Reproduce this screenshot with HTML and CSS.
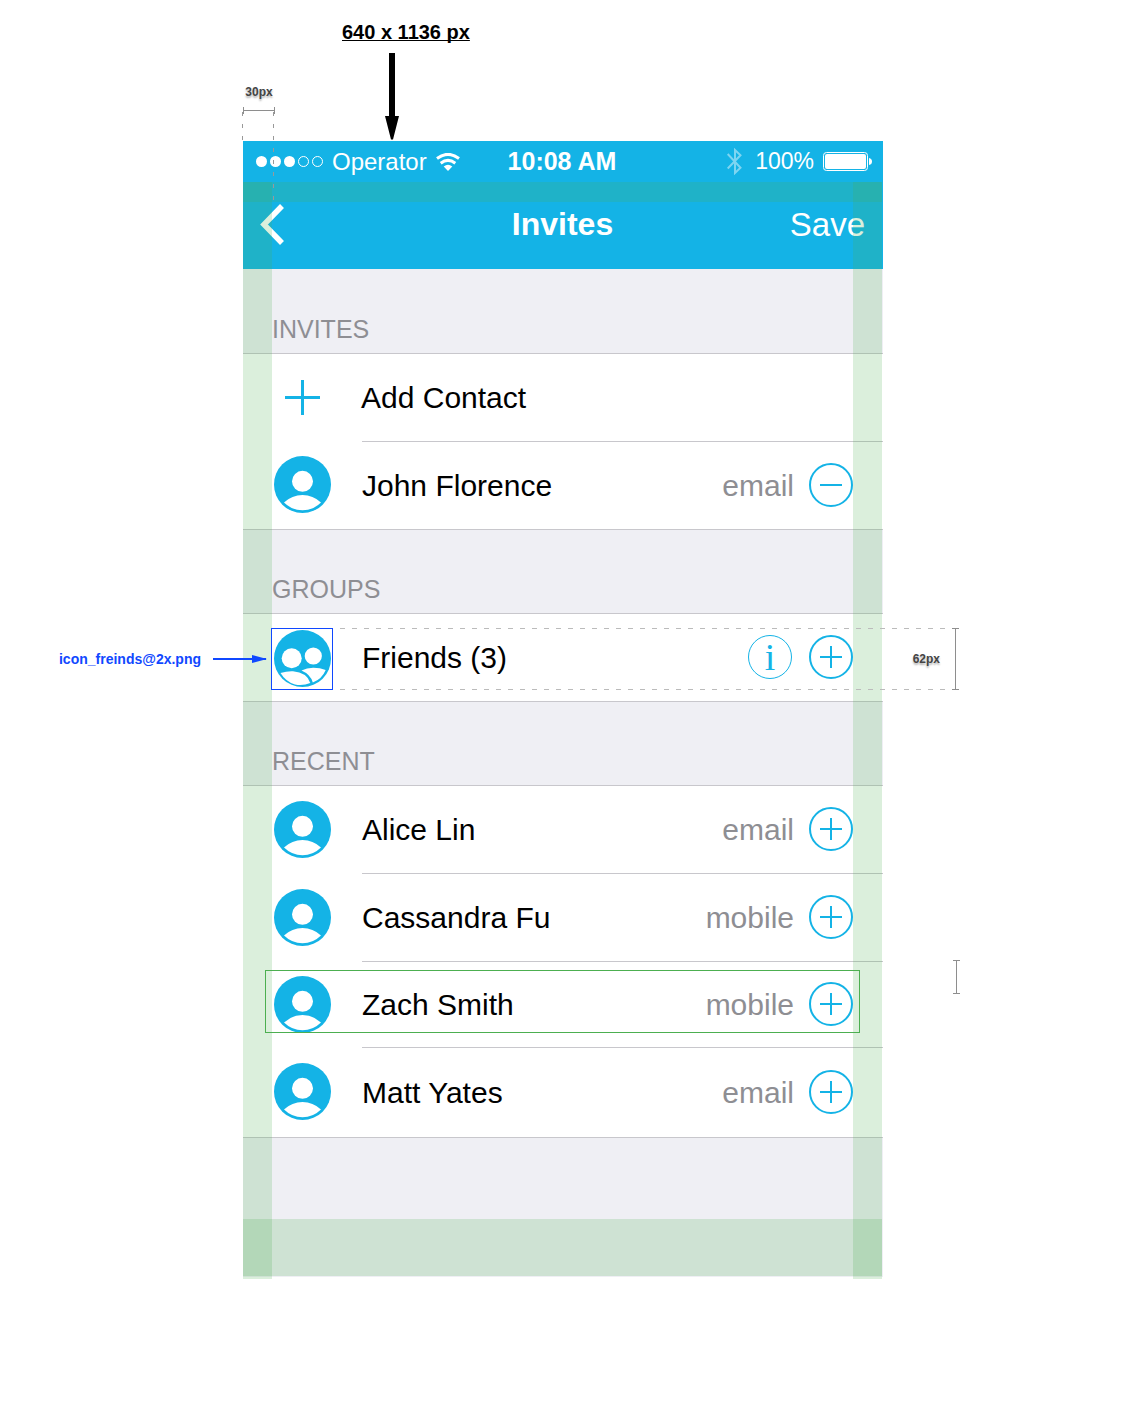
FILE: index.html
```html
<!DOCTYPE html>
<html lang="en">
<head>
<meta charset="utf-8">
<meta name="viewport" content="width=device-width, initial-scale=1">
<title>Invites – layout spec</title>
<link rel="stylesheet" href="styles.css">
</head>
<body>
<svg class="sprite" aria-hidden="true">
  <symbol id="person" viewBox="0 0 57 57">
    <circle cx="28.5" cy="28.5" r="28.5" fill="#14b3e6"/>
    <circle cx="28.5" cy="25.3" r="10.5" fill="#fff"/>
    <path d="M10 46.5Q18 39 28.5 39T47 46.5Q39 54.3 28.5 54.3T10 46.5Z" fill="#fff"/>
  </symbol>
  <symbol id="plus" viewBox="0 0 22 22"><path d="M11 0V22M0 11H22" stroke="#14b3e6" stroke-width="2"/></symbol>
  <symbol id="minus" viewBox="0 0 22 22"><path d="M0 11H22" stroke="#14b3e6" stroke-width="2"/></symbol>
</svg>

<main class="spec">
  <header class="spec-head">
    <div class="inset-note">
      <span class="measure-label">30px</span>
      <svg width="32" height="7" viewBox="0 0 32 7"><path d="M.5 0V7M31.5 0V7M0 3.5H32" stroke="#8e8e8e" fill="none"/></svg>
    </div>
    <div class="size-note">
      <span class="size-label">640 x 1136 px</span>
      <svg class="size-arrow" width="14" height="88" viewBox="0 0 14 88"><path d="M4 0H10V63H14L8 86.500H6L0 63H4Z"/></svg>
    </div>
  </header>

  <section class="phone">
    <div class="status">
      <div class="status-group">
        <svg width="67" height="11" viewBox="0 0 67 11" fill="#fff"><circle cx="5.500" cy="5.500" r="5.500"/><circle cx="19.500" cy="5.500" r="5.500"/><circle cx="33.500" cy="5.500" r="5.500"/><g fill="none" stroke="#fff"><circle cx="47.500" cy="5.500" r="5"/><circle cx="61.500" cy="5.500" r="5"/></g></svg>
        <span class="operator">Operator</span>
        <svg width="24" height="18" viewBox="0 0 24 18" fill="none" stroke="#fff" stroke-width="3"><path d="M1 5.500Q12-2.800 23 5.500M4.700 10.200Q12 4.600 19.300 10.200"/><path d="M12 18L7.700 13.400Q12 10.200 16.300 13.400Z" fill="#fff" stroke="none"/></svg>
      </div>
      <span class="time">10:08 AM</span>
      <div class="status-group status-end">
        <svg width="15" height="27" viewBox="0 0 15 27" fill="none" stroke="#fff" stroke-width="2" opacity=".45"><path d="M.7 6L13.500 19.800L8 25V2L13.500 7.200L.7 20.500"/></svg>
        <span class="charge">100%</span>
        <svg width="49" height="19" viewBox="0 0 49 19" fill="#fff"><rect x=".5" y=".5" width="44" height="18" rx="3" fill="none" stroke="#fff"/><rect x="2" y="2" width="41" height="15" rx="2"/><path d="M46 6Q49 6.500 49 9.500T46 13Z"/></svg>
      </div>
    </div>

    <nav class="nav">
      <button class="back" type="button" aria-label="Back"><svg width="24" height="41" viewBox="0 0 24 41"><path d="M22 2L4 20.500L22 39" fill="none" stroke="#fff" stroke-width="5.500"/></svg></button>
      <h1 class="title">Invites</h1>
      <button class="save" type="button">Save</button>
    </nav>

    <div class="lists">
      <h2 class="group">Invites</h2>
      <ul class="list">
        <li class="row">
          <button class="add" type="button">
            <svg class="add-icon" width="35" height="35" viewBox="0 0 35 35"><path d="M17.500 0V35M0 17.500H35" stroke="#14b3e6" stroke-width="3"/></svg>
            <span>Add Contact</span>
          </button>
        </li>
        <li class="row">
          <svg class="avatar"><use href="#person"/></svg>
          <span class="name">John Florence</span>
          <span class="via">email</span>
          <button class="round" type="button" aria-label="Remove John Florence"><svg class="sign"><use href="#minus"/></svg></button>
        </li>
      </ul>

      <h2 class="group">Groups</h2>
      <ul class="list">
        <li class="row">
          <svg class="avatar avatar-group" viewBox="0 0 57 57"><circle cx="28.500" cy="28.500" r="28.500" fill="#14b3e6"/><g fill="#fff"><circle cx="17.700" cy="28.300" r="10"/><circle cx="39.300" cy="26" r="8.600"/><path d="M6.500 43Q13 41 19 41.300Q33 42.500 36.300 53Q29 56 21 54.500Q12 52 6.500 43Z"/><path d="M27.500 40.600Q33 37.600 39.500 37.700Q46 37.700 51.700 40Q48 49 38.800 52.500Q36.500 44.500 27.500 40.600Z"/></g></svg>
          <span class="name">Friends (3)</span>
          <button class="round info" type="button" aria-label="About Friends">i</button>
          <button class="round" type="button" aria-label="Add Friends"><svg class="sign"><use href="#plus"/></svg></button>
          <div class="asset-box"></div>
          <div class="asset-note">
            <span>icon_freinds@2x.png</span>
            <svg width="54" height="10" viewBox="0 0 54 10"><path d="M0 5H53" stroke="#1048ff" stroke-width="2"/><path d="M39 1L54 5L39 9Z" fill="#1048ff"/></svg>
          </div>
          <div class="height-note">
            <span class="measure-label">62px</span>
            <svg width="7" height="62" viewBox="0 0 7 62"><path d="M0 .5H7M0 61.500H7M3.500 0V62" stroke="#8e8e8e" fill="none"/></svg>
          </div>
        </li>
      </ul>

      <h2 class="group">Recent</h2>
      <ul class="list">
        <li class="row">
          <svg class="avatar"><use href="#person"/></svg>
          <span class="name">Alice Lin</span>
          <span class="via">email</span>
          <button class="round" type="button" aria-label="Add Alice Lin"><svg class="sign"><use href="#plus"/></svg></button>
        </li>
        <li class="row">
          <svg class="avatar"><use href="#person"/></svg>
          <span class="name">Cassandra Fu</span>
          <span class="via">mobile</span>
          <button class="round" type="button" aria-label="Add Cassandra Fu"><svg class="sign"><use href="#plus"/></svg></button>
        </li>
        <li class="row row-short">
          <svg class="avatar"><use href="#person"/></svg>
          <span class="name">Zach Smith</span>
          <span class="via">mobile</span>
          <button class="round" type="button" aria-label="Add Zach Smith"><svg class="sign"><use href="#plus"/></svg></button>
          <div class="row-box"></div>
          <svg class="gap-note" width="7" height="34" viewBox="0 0 7 34"><path d="M0 .5H7M0 33.500H7M3.500 0V34" stroke="#8e8e8e" fill="none"/></svg>
        </li>
        <li class="row row-tall">
          <svg class="avatar"><use href="#person"/></svg>
          <span class="name">Matt Yates</span>
          <span class="via">email</span>
          <button class="round" type="button" aria-label="Add Matt Yates"><svg class="sign"><use href="#plus"/></svg></button>
        </li>
      </ul>
    </div>

    <div class="band band-left"></div>
    <div class="band band-right"></div>
    <div class="band band-top"></div>
    <div class="band band-bottom"></div>
    <div class="dash dash-edge"></div>
    <div class="dash dash-inset"></div>
  </section>
</main>
</body>
</html>
```
FILE: styles.css
```css
* { box-sizing: border-box; }

body {
  margin: 0;
  background: #fff;
  color: #000;
  font-family: "Liberation Sans", Arial, Helvetica, sans-serif;
}

svg { display: block; flex: none; }
.sprite { position: absolute; width: 0; height: 0; }

button {
  margin: 0;
  padding: 0;
  border: 0;
  background: none;
  color: inherit;
  font: inherit;
  cursor: pointer;
}

.spec {
  max-width: 640px;
  margin: 0 auto;
  padding-bottom: 141px;
}

/* notes above the artboard */
.spec-head {
  display: flex;
  align-items: flex-start;
  gap: 67px;
  padding-top: 20px;
}

.inset-note {
  display: flex;
  flex-direction: column;
  align-items: center;
  gap: 8px;
  width: 32px;
  padding-top: 65px;
}

.measure-label {
  color: #444;
  font-size: 12px;
  font-weight: bold;
  line-height: 14px;
  text-shadow: 0 2px 2px rgba(0, 0, 0, 0.3);
}

.size-label {
  display: block;
  font-size: 20px;
  font-weight: bold;
  line-height: 24px;
  text-decoration: underline;
  text-decoration-thickness: 1px;
  text-decoration-skip-ink: none;
}

.size-arrow { margin: 9px 0 0 43px; }

/* artboard */
.phone {
  position: relative;
  background: #efeff4;
  padding-bottom: 139px;
}

.status {
  display: grid;
  grid-template-columns: 1fr auto 1fr;
  align-items: center;
  height: 41px;
  padding: 0 11px 0 13px;
  background: #14b3e6;
  color: #fff;
  font-size: 24px;
}

.status-group { display: flex; align-items: center; gap: 9px; }
.status-end { justify-content: flex-end; }
.charge { padding-left: 4px; font-size: 23px; }
.time { padding-right: 4px; font-size: 25px; font-weight: bold; }

.nav {
  display: grid;
  grid-template-columns: 1fr auto 1fr;
  align-items: center;
  height: 87px;
  padding: 0 18px 2px 17px;
  background: #14b3e6;
  color: #fff;
}

.back { justify-self: start; }
.title { margin: 0; font-size: 32px; line-height: 40px; padding-bottom: 2px; }
.save { justify-self: end; font-size: 33px; }

.lists { padding-top: 1px; }

.group {
  display: flex;
  align-items: flex-end;
  height: 84px;
  margin: 0;
  padding: 0 29px 10px;
  border-bottom: 1px solid #c8c7cc;
  color: #8e8e93;
  font-size: 25px;
  font-weight: normal;
  line-height: 28px;
  text-transform: uppercase;
}

.list {
  margin: 0;
  padding: 0;
  list-style: none;
  background: #fff;
  border-bottom: 1px solid #c8c7cc;
  font-size: 30px;
}

.row {
  position: relative;
  display: flex;
  align-items: center;
  height: 88px;
  padding: 0 30px 0 31px;
}

.row:last-child { height: 87px; }
.row-short { height: 86px; }
.row.row-tall { height: 89px; }

/* separator starts at the text column */
.row:not(:last-child)::after {
  content: "";
  position: absolute;
  right: 0;
  bottom: 0;
  left: 119px;
  height: 1px;
  background: #c8c7cc;
}

.avatar { width: 57px; height: 57px; margin-bottom: 2px; }
.avatar-group { margin: 2px 0 0; }
.name { flex: 1; padding-left: 31px; }
.via { color: #8e8e93; margin-right: 15px; }

.add {
  display: flex;
  align-items: center;
  flex: 1;
  gap: 41px;
  height: 100%;
  padding-left: 11px;
}

.add-icon { margin-bottom: 2px; }

.round {
  display: flex;
  align-items: center;
  justify-content: center;
  width: 44px;
  height: 44px;
  margin-bottom: 2px;
  border: 2px solid #14b3e6;
  border-radius: 50%;
  color: #14b3e6;
}

.sign { width: 22px; height: 22px; }

.info {
  margin-right: 17px;
  border-width: 1px;
  font-family: "Liberation Serif", "Times New Roman", serif;
  font-size: 38px;
  line-height: 40px;
}

/* margin guides */
.band {
  position: absolute;
  z-index: 1;
  background: rgba(76, 175, 80, 0.2);
  pointer-events: none;
}

.band-left, .band-right { top: 41px; bottom: -2px; width: 29px; }
.band-left { left: 0; }
.band-right { right: 1px; }
.band-top { top: 41px; left: 0; right: 1px; height: 20px; }
.band-bottom { bottom: 1px; left: 0; right: 1px; height: 57px; }

.dash {
  position: absolute;
  z-index: 2;
  top: -29px;
  width: 1px;
  background: repeating-linear-gradient(transparent 0 12px, #999 12px 16px, transparent 16px 24px, #999 24px 28px, transparent 28px 36px, #999 36px 40px, transparent 40px 48px);
  background: repeating-linear-gradient(#999 0 4px, transparent 4px 12px);
}

.dash-edge { left: -1px; height: 29px; }
.dash-inset { left: 30px; height: 89px; }

/* callouts laid over the rows */
.asset-box, .asset-note, .height-note, .row-box, .gap-note {
  position: absolute;
  z-index: 2;
  pointer-events: none;
}

.asset-box {
  top: 14px;
  left: 28px;
  width: 62px;
  height: 62px;
  border: 1px solid #1048ff;
}

.asset-note {
  display: flex;
  align-items: center;
  gap: 12px;
  top: 36px;
  right: calc(100% - 24px);
  color: #1048ff;
  font-size: 14px;
  font-weight: bold;
  line-height: 18px;
}

.height-note {
  display: flex;
  align-items: center;
  justify-content: flex-end;
  gap: 12px;
  top: 13px;
  right: -76px;
  left: 90px;
  height: 63px;
  background:
    repeating-linear-gradient(90deg, transparent 0 7px, #bbb 7px 12px) 0 1px / 100% 1px no-repeat,
    repeating-linear-gradient(90deg, transparent 0 7px, #bbb 7px 12px) 0 62px / 100% 1px no-repeat;
}

.row-box {
  top: 8px;
  right: 23px;
  left: 22px;
  height: 63px;
  border: 1px solid #4caf50;
}

.gap-note { top: -2px; right: -77px; }
```
